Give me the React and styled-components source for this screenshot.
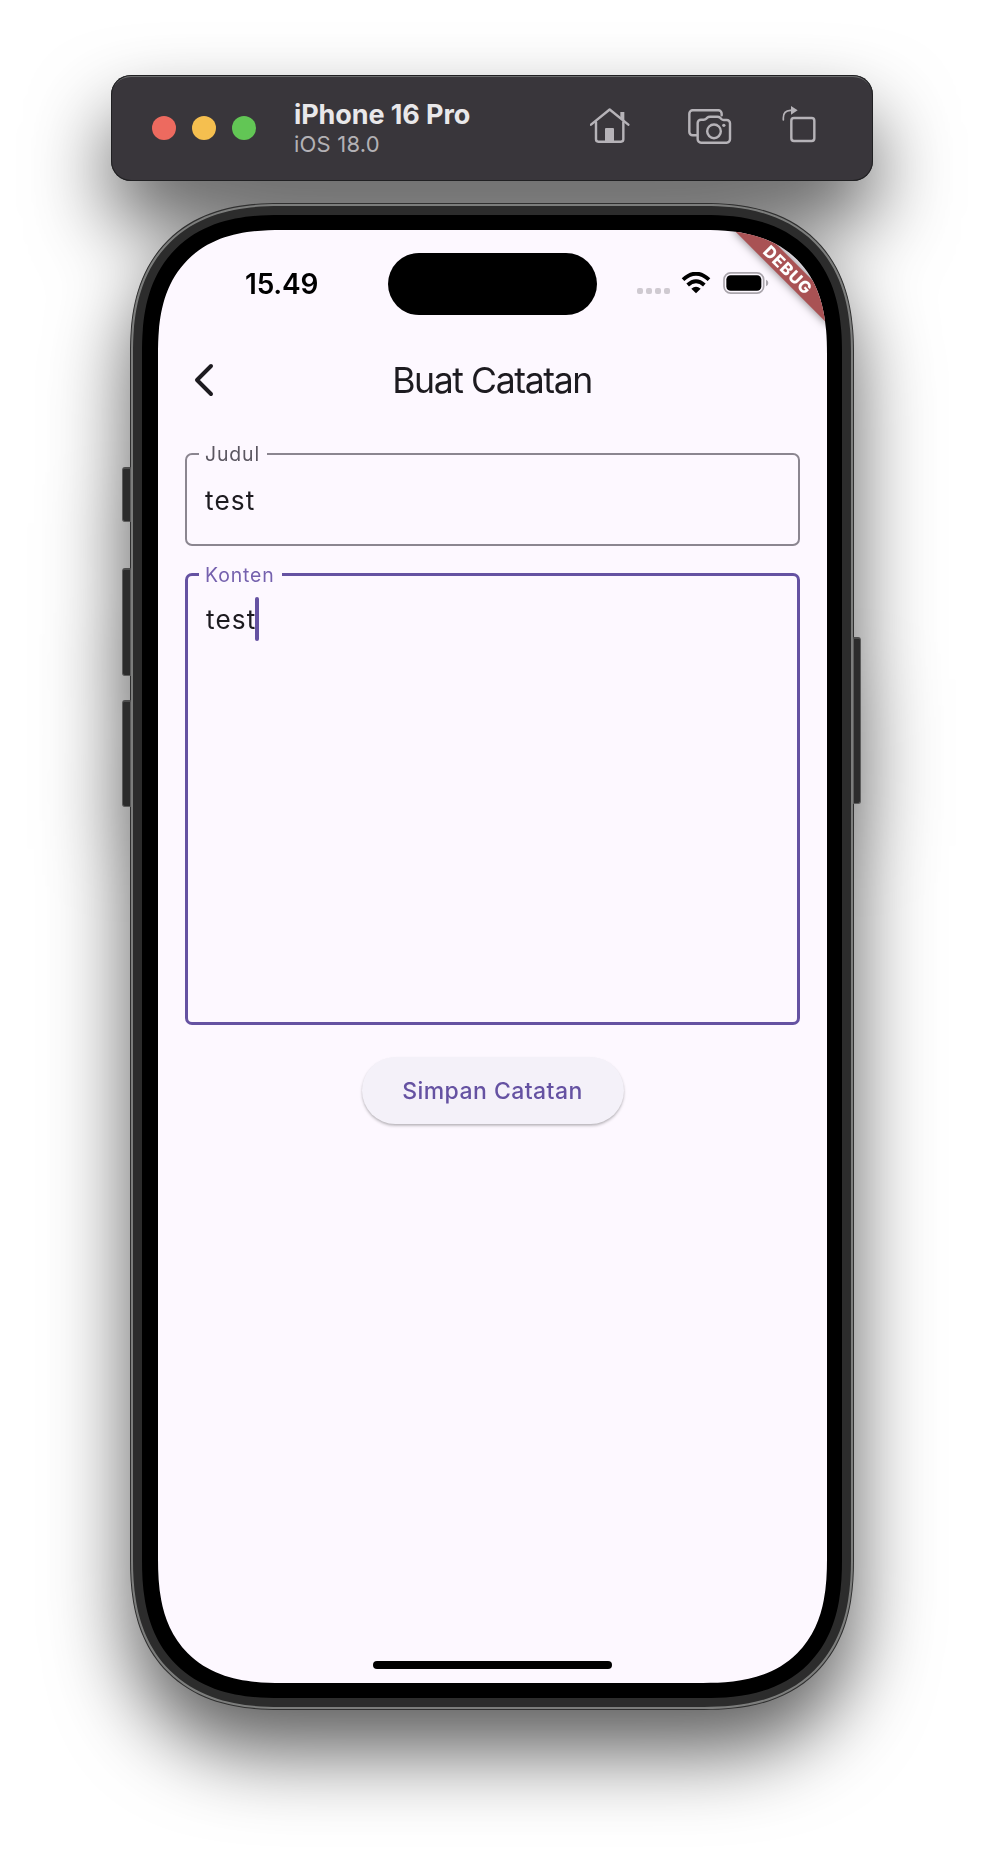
import React from "react";
import styled, { createGlobalStyle } from "styled-components";

const GlobalStyle = createGlobalStyle`
  * { box-sizing: border-box; }
  body {
    margin: 0;
    background: #fff;
    font-family: Inter, "Liberation Sans", sans-serif;
  }
`;

const Stage = styled.main`
  width: 984px;
  height: 1862px;
  padding-top: 75px;
  overflow: hidden;
  background: #fff;
`;

const Simulator = styled.div`
  display: flex;
  flex-direction: column;
  align-items: center;
  gap: 22px;
  filter: drop-shadow(0 42px 40px rgba(0, 0, 0, 0.63));
`;

const Toolbar = styled.header`
  width: 762px;
  height: 106px;
  padding: 0 57px 0 41px;
  display: flex;
  align-items: center;
  background: #39363b;
  border-radius: 20px;
  box-shadow: inset 0 0 0 1px #202022, inset 0 2px 0 0 #6c6d6e;
`;

const Lights = styled.div`
  display: flex;
  gap: 16px;
`;

const Light = styled.span`
  width: 24px;
  height: 24px;
  border-radius: 50%;
  background: ${(p) => p.$color};
`;

const DeviceInfo = styled.div`
  margin: 1px 0 0 38px;
  flex: 1;
`;

const DeviceName = styled.div`
  font-size: 27px;
  line-height: 32px;
  font-weight: 700;
  letter-spacing: -0.1px;
  color: #e9e8ea;
`;

const DeviceOs = styled.div`
  font-size: 22px;
  line-height: 27px;
  letter-spacing: 0.2px;
  color: #b3b1b5;
`;

const Actions = styled.div`
  display: flex;
  align-items: center;
  margin-top: -4px;
  color: #b6b3b8;
`;

const ActionIcon = styled.svg`
  display: block;
  height: 40px;
  width: ${(p) => p.$w}px;
  margin-left: ${(p) => p.$gap || 0}px;
  fill: none;
  stroke: currentColor;
  stroke-width: 7.3;
  stroke-linecap: round;
  stroke-linejoin: round;
`;

const Phone = styled.section`
  position: relative;
  width: 724px;
  height: 1507px;
  padding: 2px;
  background: #7c7d7c;
  border: 1px solid #303030;
  border-radius: 150px;
  corner-shape: superellipse(1.27);
`;

const Band = styled.div`
  height: 100%;
  padding: 9px;
  background: #2c2c2c;
  border-radius: 147px;
  corner-shape: superellipse(1.27);
`;

const Bezel = styled.div`
  height: 100%;
  padding: 15px 15px 15px 16px;
  background: #000;
  border-radius: 138px;
  corner-shape: superellipse(1.3);
`;

const Screen = styled.div`
  position: relative;
  height: 100%;
  overflow: hidden;
  display: flex;
  flex-direction: column;
  background: #fdf8ff;
  border-radius: 124px;
  corner-shape: superellipse(1.336);
`;

const SideKey = styled.span`
  position: absolute;
  top: ${(p) => p.$top}px;
  ${(p) => (p.$right ? "right: -8px;" : "left: -9px;")}
  width: ${(p) => (p.$right ? 8 : 9)}px;
  height: ${(p) => p.$h}px;
  background: #2c2c2c;
  border: 1px solid #5c5c5c;
  border-top: 2px solid #4c4c4c;
  border-radius: ${(p) => (p.$right ? "0 3px 3px 0" : "3px 0 0 3px")};
`;

const StatusBar = styled.div`
  height: 108px;
  padding: 23px 58px 0 0;
  display: grid;
  grid-template-columns: 230px 209px 1fr;
  align-items: start;
`;

const Clock = styled.time`
  padding: 13px 0 0 87px;
  font-size: 28px;
  line-height: 36px;
  font-weight: 600;
  letter-spacing: -0.2px;
  color: #000;
`;

const Island = styled.div`
  height: 62px;
  border-radius: 31px;
  background: #000;
`;

const StatusIcons = styled.div`
  height: 59px;
  display: flex;
  align-items: center;
  justify-content: flex-end;
`;

const Signal = styled.div`
  display: flex;
  gap: 3px;
  margin: 16px 11px 0 0;
  span {
    width: 6px;
    height: 6px;
    border-radius: 2px;
    background: #cfcad1;
  }
`;

const Wifi = styled.svg`
  width: 30px;
  height: 22px;
  margin-right: 12px;
`;

const Battery = styled.svg`
  width: 46px;
  height: 22px;
`;

const AppBar = styled.div`
  height: 93px;
  padding: 0 34px 7px 35px;
  display: grid;
  grid-template-columns: 26px 1fr 26px;
  align-items: center;
`;

const BackIcon = styled.svg`
  width: 24px;
  height: 34px;
  margin-top: -3px;
`;

const PageTitle = styled.h1`
  margin: 0 2px 0 0;
  text-align: center;
  font-size: 35.6px;
  line-height: 46px;
  font-weight: 400;
  letter-spacing: -1.4px;
  color: #1d1b20;
`;

const Form = styled.form`
  padding: 11px 27px 0 27px;
  display: flex;
  flex-direction: column;
  align-items: center;
`;

const Field = styled.fieldset`
  width: 100%;
  min-width: 0;
  height: ${(p) => p.$h}px;
  margin: 0 0 ${(p) => p.$after}px;
  padding: 0 18px;
  border: ${(p) => (p.$focused ? "3px solid #6552a2" : "2px solid #8b8690")};
  border-radius: 7px;
`;

const Label = styled.legend`
  margin-left: ${(p) => (p.$focused ? -7 : -6)}px;
  padding: ${(p) => (p.$focused ? 2 : 0)}px 7px 0 6px;
  font-size: 19.4px;
  line-height: 24px;
  letter-spacing: 0.9px;
  color: ${(p) => (p.$focused ? "#7561ae" : "#5b5761")};
`;

const Value = styled.div`
  display: flex;
  align-items: center;
  height: 44px;
  margin-top: ${(p) => p.$top}px;
  font-size: 26.2px;
  letter-spacing: 1.1px;
  color: #1d1b20;
`;

const Caret = styled.span`
  width: 3.4px;
  height: 44px;
  margin-left: -1px;
  border-radius: 2px;
  background: #6552a2;
`;

const SaveButton = styled.button`
  width: 262px;
  height: 67px;
  padding: 1px 0 0;
  border: 0;
  border-radius: 34px;
  background: #f4f1f9;
  box-shadow: 0 2px 3px rgba(0, 0, 0, 0.22), 0 1px 2px rgba(0, 0, 0, 0.08);
  font: 500 23px/28px Inter, "Liberation Sans", sans-serif;
  letter-spacing: 0.45px;
  color: #6552a2;
`;

const HomeIndicator = styled.div`
  width: 239px;
  height: 8px;
  margin: auto auto 14px;
  border-radius: 4px;
  background: #000;
`;

const DebugBanner = styled.div`
  position: absolute;
  top: 30px;
  right: -28px;
  width: 134px;
  height: 20px;
  transform: rotate(45deg);
  display: flex;
  align-items: center;
  justify-content: center;
  background: #a95254;
  box-shadow: 0 0 10px rgba(0, 0, 0, 0.5);
  font-size: 16.5px;
  line-height: 20px;
  font-weight: 800;
  letter-spacing: 0.8px;
  color: #fff;
`;

function OutlinedField({ label, value, focused, height, after, valueTop }) {
  return (
    <Field $h={height} $after={after} $focused={focused}>
      <Label $focused={focused}>{label}</Label>
      <Value $top={valueTop}>
        {value}
        {focused && <Caret />}
      </Value>
    </Field>
  );
}

export default function App() {
  return (
    <>
      <GlobalStyle />
      <Stage>
        <Simulator>
          <Toolbar>
            <Lights>
              <Light $color="#ed6a5f" />
              <Light $color="#f5bf4f" />
              <Light $color="#62c655" />
            </Lights>
            <DeviceInfo>
              <DeviceName>iPhone 16 Pro</DeviceName>
              <DeviceOs>iOS 18.0</DeviceOs>
            </DeviceInfo>
            <Actions>
              <ActionIcon $w={40} viewBox="90 138 120 120">
                <path d="M93 194 L149 148.500 L205 194" />
                <path d="M108 187V238q0 7 7 7H183q7 0 7-7V187" />
                <path d="M181 176V156h12v30z" fill="currentColor" stroke="none" />
                <rect x="135" y="204" width="27" height="42" rx="3" fill="currentColor" stroke="none" />
              </ActionIcon>
              <ActionIcon $w={44} $gap={58} viewBox="383 138 132 120">
                <path d="M408 226H397a10 10 0 0 1-10-10V161a10 10 0 0 1 10-10H474a10 10 0 0 1 10 10V166" />
                <path d="M422 179H430q5 0 8-3l3-3q3-3 8-3H471q5 0 8 3l4 4q3 3 7 3h9a10 10 0 0 1 10 10V238a10 10 0 0 1-10 10H422a10 10 0 0 1-10-10V189a10 10 0 0 1 10-10z" />
                <circle cx="461" cy="214" r="20.500" />
                <circle cx="490.500" cy="196" r="5" fill="currentColor" stroke="none" />
              </ActionIcon>
              <ActionIcon $w={34} $gap={50} viewBox="665 138 102 120">
                <rect x="693" y="174" width="69" height="69" rx="8" />
                <path d="M669 180V173q0-21 21-22h4" strokeWidth="5" />
                <path d="M692 138L712 151L692 164z" fill="currentColor" stroke="none" />
              </ActionIcon>
            </Actions>
          </Toolbar>

          <Phone>
            <SideKey $top={263} $h={55} />
            <SideKey $top={364} $h={108} />
            <SideKey $top={496} $h={107} />
            <SideKey $right $top={433} $h={167} />
            <Band>
              <Bezel>
                <Screen>
                  <StatusBar>
                    <Clock>15.49</Clock>
                    <Island />
                    <StatusIcons>
                      <Signal>
                        <span />
                        <span />
                        <span />
                        <span />
                      </Signal>
                      <Wifi viewBox="0 0 90 66" fill="none" stroke="#000" strokeWidth="11.500">
                        <path d="M6 23Q45-13 84 23" />
                        <path d="M20 39Q45 16 70 39" />
                        <path d="M45 64L31 50Q45 39 59 50z" fill="#000" stroke="none" />
                      </Wifi>
                      <Battery viewBox="0 0 138 66">
                        <rect x="3" y="2.500" width="119" height="61" rx="20" fill="none" stroke="#aaa5ac" strokeWidth="5" />
                        <rect x="10" y="9.500" width="105" height="47" rx="13" fill="#000" />
                        <path d="M129 23q7 3 7 10t-7 10z" fill="#aaa5ac" />
                      </Battery>
                    </StatusIcons>
                  </StatusBar>
                  <AppBar>
                    <BackIcon viewBox="0 0 24 34" fill="none" stroke="#1d1b20" strokeWidth="4" strokeLinecap="round" strokeLinejoin="round">
                      <path d="M18 3L4 17L18 31" />
                    </BackIcon>
                    <PageTitle>Buat Catatan</PageTitle>
                  </AppBar>
                  <Form>
                    <OutlinedField label="Judul" value="test" height={104} after={15} valueTop={12} />
                    <OutlinedField label="Konten" value="test" focused height={464} after={32} valueTop={10} />
                    <SaveButton type="button">Simpan Catatan</SaveButton>
                  </Form>
                  <HomeIndicator />
                  <DebugBanner>DEBUG</DebugBanner>
                </Screen>
              </Bezel>
            </Band>
          </Phone>
        </Simulator>
      </Stage>
    </>
  );
}
